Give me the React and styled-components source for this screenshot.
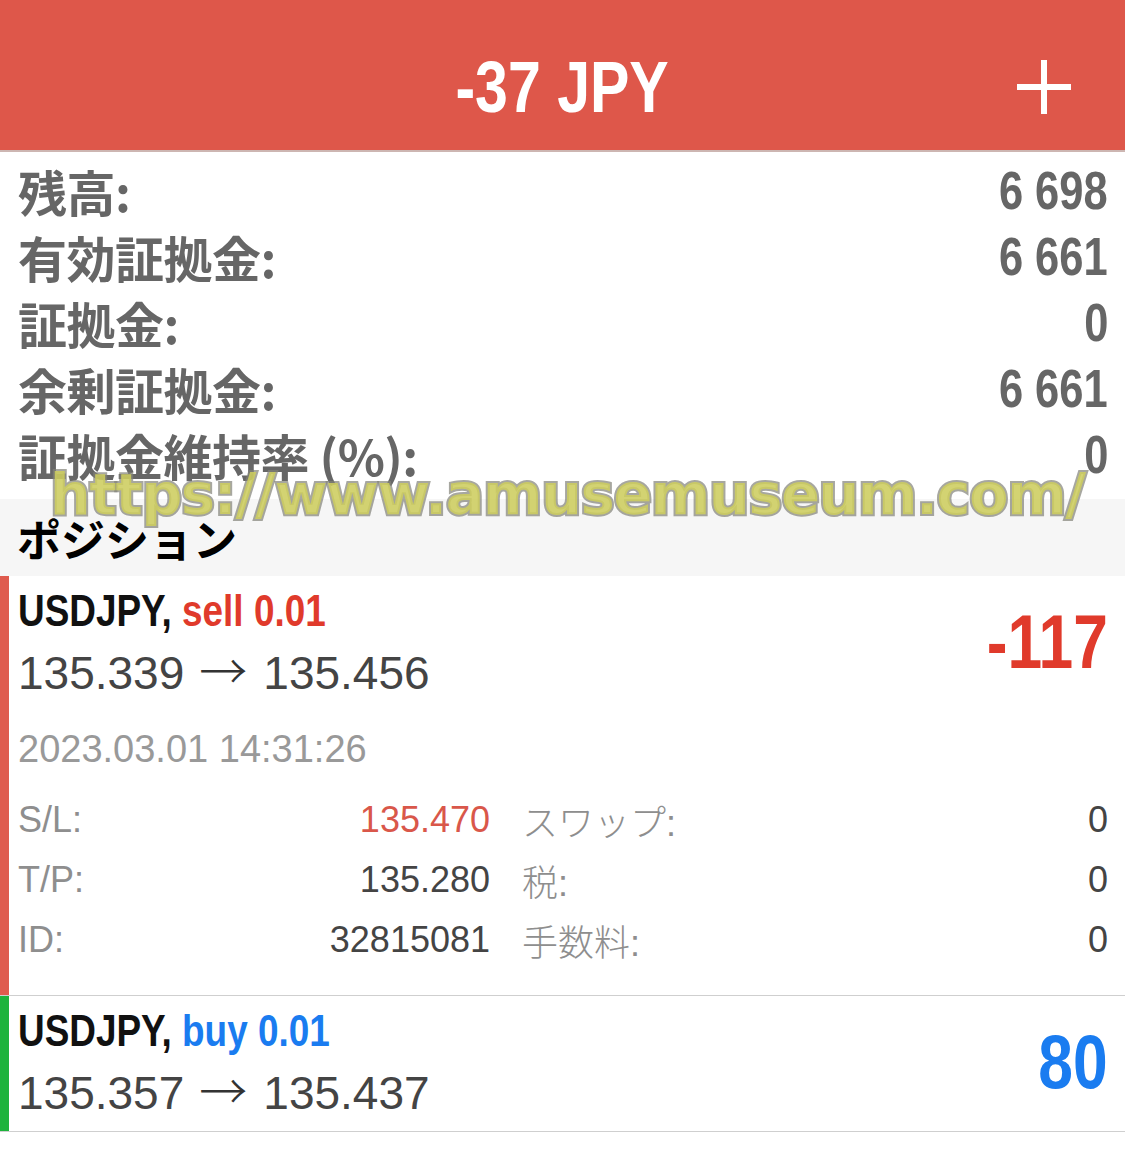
import React from 'react';
import styled, { createGlobalStyle } from 'styled-components';

const GlobalStyle = createGlobalStyle`
    body {
        margin: 0;
        background: #fff;
        font-family: "Liberation Sans", Arial, sans-serif;
    }
`;

const jp = `"Noto Sans CJK JP", "Noto Sans", sans-serif`;

// the app uses a condensed bold face; squeeze Liberation Sans Bold to match
const Condensed = styled.span`
    display: inline-block;
    font-family: "Liberation Sans", Arial, sans-serif;
    font-weight: 700;
    white-space: nowrap;
    transform: scaleX(0.82);
    transform-origin: ${(p) => p.$origin || 'left'} center;
`;

const Page = styled.div`
    position: relative;
    width: 1125px;
    min-height: 1160px;
    background: #fff;
`;

const Header = styled.header`
    height: 152px;
    box-sizing: border-box;
    padding-top: 24px;
    background: #de574a;
    border-bottom: 2px solid #cdb6b2;
    display: grid;
    grid-template-columns: 1fr auto 1fr;
    align-items: center;
`;

const Title = styled.h1`
    grid-column: 2;
    margin: 0;
    font-size: 72px;
    font-weight: 700;
    color: #fff;
    line-height: 1;
`;

const PlusButton = styled.div`
    justify-self: end;
    margin-right: 54px;
    width: 54px;
    height: 54px;
    display: flex;
`;

const Summary = styled.section`
    padding: 5px 17px 12px 18px;
`;

const SummaryRow = styled.div`
    display: flex;
    justify-content: space-between;
    align-items: center;
    height: 66px;
    color: #666;
`;

const SummaryLabel = styled.span`
    font-family: ${jp};
    font-weight: 700;
    font-size: 49px;
    letter-spacing: -0.5px;
`;

const SummaryValue = styled.span`
    font-size: 53px;
`;

const SectionHeader = styled.div`
    height: 77px;
    display: flex;
    align-items: center;
    padding-left: 17px;
    background: #f6f6f6;
    font-family: ${jp};
    font-weight: 700;
    font-size: 44px;
    color: #000;
`;

const Position = styled.div`
    display: flex;
    border-bottom: 1px solid #cfcfcf;
`;

const Bar = styled.div`
    width: 9px;
    flex-shrink: 0;
    background: ${(p) => p.$color};
`;

const Body = styled.div`
    flex: 1;
    padding: 4px 17px ${(p) => (p.$open ? '25px' : '7px')} 9px;
`;

const Top = styled.div`
    display: flex;
    justify-content: space-between;
    align-items: center;
`;

const Symbol = styled.div`
    font-size: 45px;
    line-height: 62px;
    color: #111;
`;

const Side = styled.span`
    color: ${(p) => p.$color};
`;

const Prices = styled.div`
    height: 62px;
    font-size: 46px;
    line-height: 62px;
    color: #444;
    white-space: nowrap;
`;

const Arrow = styled.span`
    display: inline-block;
    margin: 0 16px 0 15px;
    font-family: ${jp};
    font-weight: 300;
    font-size: 48px;
    line-height: 1;
    color: #333;
`;

const Profit = styled.div`
    font-size: 76px;
    color: ${(p) => p.$color};
    line-height: 1;
`;

const OpenTime = styled.div`
    margin-top: 20px;
    font-size: 38px;
    line-height: 50px;
    color: #999;
`;

const Details = styled.div`
    margin-top: 16px;
    display: grid;
    grid-template-columns: 472px 1fr;
    column-gap: 32px;
`;

const Cell = styled.div`
    display: flex;
    justify-content: space-between;
    align-items: center;
    height: 60px;
    font-size: 36px;
`;

const CellLabel = styled.span`
    font-family: "Liberation Sans", ${jp};
    font-weight: 300;
    color: #8e8e8e;
`;

const CellValue = styled.span`
    color: ${(p) => p.$color || '#444'};
`;

const Watermark = styled.div`
    position: absolute;
    left: 50px;
    top: 461px;
    font-family: "DejaVu Sans", sans-serif;
    font-weight: 700;
    font-size: 57px;
    letter-spacing: -1.2px;
    color: rgba(205, 205, 95, 0.88);
    -webkit-text-stroke: 4px rgba(130, 130, 120, 0.7);
    paint-order: stroke fill;
    white-space: nowrap;
    pointer-events: none;
`;

const RED = '#e03a2b';
const BLUE = '#1a7cf0';

const summary = [
    ['残高:', '6 698'],
    ['有効証拠金:', '6 661'],
    ['証拠金:', '0'],
    ['余剰証拠金:', '6 661'],
    ['証拠金維持率 (%):', '0'],
];

function Trade({ side, color, barColor, open, close, profit, children }) {
    return (
        <Position>
            <Bar $color={barColor} />
            <Body $open={!!children}>
                <Top>
                    <div>
                        <Symbol>
                            <Condensed>
                                USDJPY, <Side $color={color}>{side}</Side>
                            </Condensed>
                        </Symbol>
                        <Prices>
                            {open}
                            <Arrow>→</Arrow>
                            {close}
                        </Prices>
                    </div>
                    <Profit $color={color}>
                        <Condensed $origin="right">{profit}</Condensed>
                    </Profit>
                </Top>
                {children}
            </Body>
        </Position>
    );
}

function App() {
    return (
        <Page>
            <GlobalStyle />
            <Header>
                <Title>
                    <Condensed $origin="center">-37 JPY</Condensed>
                </Title>
                <PlusButton>
                    <svg width="54" height="54" viewBox="0 0 54 54">
                        <path d="M27 0V54M0 27H54" stroke="#fff" strokeWidth="6" />
                    </svg>
                </PlusButton>
            </Header>

            <Summary>
                {summary.map(([label, value]) => (
                    <SummaryRow key={label}>
                        <SummaryLabel>{label}</SummaryLabel>
                        <SummaryValue>
                            <Condensed $origin="right">{value}</Condensed>
                        </SummaryValue>
                    </SummaryRow>
                ))}
            </Summary>

            <SectionHeader>ポジション</SectionHeader>

            <Trade
                side="sell 0.01"
                color={RED}
                barColor="#df5b4e"
                open="135.339"
                close="135.456"
                profit="-117"
            >
                <OpenTime>2023.03.01 14:31:26</OpenTime>
                <Details>
                    <Cell>
                        <CellLabel>S/L:</CellLabel>
                        <CellValue $color="#d9574a">135.470</CellValue>
                    </Cell>
                    <Cell>
                        <CellLabel>スワップ:</CellLabel>
                        <CellValue>0</CellValue>
                    </Cell>
                    <Cell>
                        <CellLabel>T/P:</CellLabel>
                        <CellValue>135.280</CellValue>
                    </Cell>
                    <Cell>
                        <CellLabel>税:</CellLabel>
                        <CellValue>0</CellValue>
                    </Cell>
                    <Cell>
                        <CellLabel>ID:</CellLabel>
                        <CellValue>32815081</CellValue>
                    </Cell>
                    <Cell>
                        <CellLabel>手数料:</CellLabel>
                        <CellValue>0</CellValue>
                    </Cell>
                </Details>
            </Trade>

            <Trade
                side="buy 0.01"
                color={BLUE}
                barColor="#1db33c"
                open="135.357"
                close="135.437"
                profit="80"
            />

            <Watermark>https://www.amusemuseum.com/</Watermark>
        </Page>
    );
}

export default App;
